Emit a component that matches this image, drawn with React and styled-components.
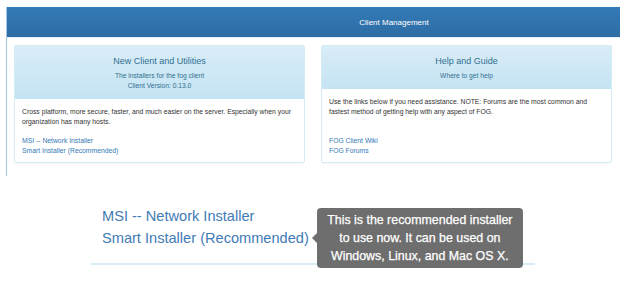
import React from "react";
import styled, { createGlobalStyle } from "styled-components";

const GlobalStyle = createGlobalStyle`
  html, body {
    margin: 0;
    padding: 0;
    background: #fff;
    font-family: "Liberation Sans", Arial, sans-serif;
    color: #333;
  }
`;

const panels = [
  {
    title: "New Client and Utilities",
    sub: ["The installers for the fog client", "Client Version: 0.13.0"],
    text: "Cross platform, more secure, faster, and much easier on the server. Especially when your organization has many hosts.",
    links: ["MSI -- Network Installer", "Smart Installer (Recommended)"],
  },
  {
    title: "Help and Guide",
    sub: ["Where to get help"],
    text: "Use the links below if you need assistance. NOTE: Forums are the most common and fastest method of getting help with any aspect of FOG.",
    links: ["FOG Client Wiki", "FOG Forums"],
  },
];

const App = () => {
  return (
    <Page>
      <GlobalStyle />
      <Frame>
        <Header>Client Management</Header>
        <Panels>
          {panels.map((p) => (
            <Panel key={p.title}>
              <PanelHeading>
                <PanelTitle>{p.title}</PanelTitle>
                {p.sub.map((s) => (
                  <PanelSub key={s}>{s}</PanelSub>
                ))}
              </PanelHeading>
              <PanelBody>
                <BodyText>{p.text}</BodyText>
                <LinkList>
                  {p.links.map((l) => (
                    <SmallLink key={l}>{l}</SmallLink>
                  ))}
                </LinkList>
              </PanelBody>
            </Panel>
          ))}
        </Panels>
      </Frame>
      <Detail>
        <DetailInner>
          <BigLink>MSI -- Network Installer</BigLink>
          <BigLink>
            Smart Installer (Recommended)
            <Tooltip>
              This is the recommended installer to use now. It can be used on
              Windows, Linux, and Mac OS X.
            </Tooltip>
          </BigLink>
        </DetailInner>
      </Detail>
    </Page>
  );
};

export default App;

const Page = styled.div`
  width: 620px;
  height: 287px;
  overflow: hidden;
  padding-top: 7px;
  box-sizing: border-box;
`;

const Frame = styled.div`
  margin-left: 6px;
  border-left: 1px solid #a3c6e4;
  height: 169px;
  box-sizing: border-box;
`;

const Header = styled.div`
  height: 30px;
  background: linear-gradient(to bottom, #337ab7 0%, #2e6da4 100%);
  color: #fff;
  font-size: 8px;
  display: flex;
  align-items: center;
  justify-content: center;
  padding-left: 161px;
  border-bottom: 1px solid #e6edf3;
`;

const Panels = styled.div`
  display: grid;
  grid-template-columns: 291px 291px;
  gap: 16px;
  padding: 7px 0 0 7px;
`;

const Panel = styled.div`
  border: 1px solid #d3ecf5;
  border-radius: 2px;
  height: 118px;
  box-sizing: border-box;
  display: flex;
  flex-direction: column;
  box-shadow: 0 1px 1px rgba(0, 0, 0, 0.03);
`;

const PanelHeading = styled.div`
  background: linear-gradient(to bottom, #d9edf7 0%, #c4e3f3 100%);
  color: #31708f;
  text-align: center;
  padding: 9px 8px 8px;
`;

const PanelTitle = styled.div`
  font-size: 9px;
  line-height: 12px;
  margin-bottom: 4px;
`;

const PanelSub = styled.div`
  font-size: 6.7px;
  line-height: 10px;
`;

const PanelBody = styled.div`
  flex: 1;
  display: flex;
  flex-direction: column;
  padding: 8px 7px 6px;
`;

const BodyText = styled.div`
  font-size: 6.8px;
  line-height: 10px;
  color: #333;
`;

const LinkList = styled.div`
  margin-top: auto;
  display: flex;
  flex-direction: column;
`;

const SmallLink = styled.a`
  font-size: 6.8px;
  line-height: 10px;
  color: #337ab7;
`;

const Detail = styled.div`
  padding: 29px 0 0 91px;
`;

const DetailInner = styled.div`
  width: 444px;
  box-sizing: border-box;
  padding: 0 0 14px 11px;
  border-bottom: 2px solid #d6eef4;
  display: flex;
  flex-direction: column;
  align-items: flex-start;
`;

const BigLink = styled.a`
  position: relative;
  font-size: 14.6px;
  line-height: 22px;
  color: #3f7bb5;
`;

const Tooltip = styled.span`
  position: absolute;
  left: calc(100% + 8px);
  top: 50%;
  transform: translateY(-50%);
  width: 206px;
  box-sizing: border-box;
  padding: 3px 4px;
  background: #6e6e6e;
  border-radius: 4px;
  color: #fff;
  font-size: 12.4px;
  line-height: 18px;
  text-align: center;
  -webkit-text-stroke: 0.25px #fff;
  &::before {
    content: "";
    position: absolute;
    left: -5px;
    top: 50%;
    margin-top: -5px;
    border-style: solid;
    border-width: 5px 5px 5px 0;
    border-color: transparent #6e6e6e transparent transparent;
  }
`;
